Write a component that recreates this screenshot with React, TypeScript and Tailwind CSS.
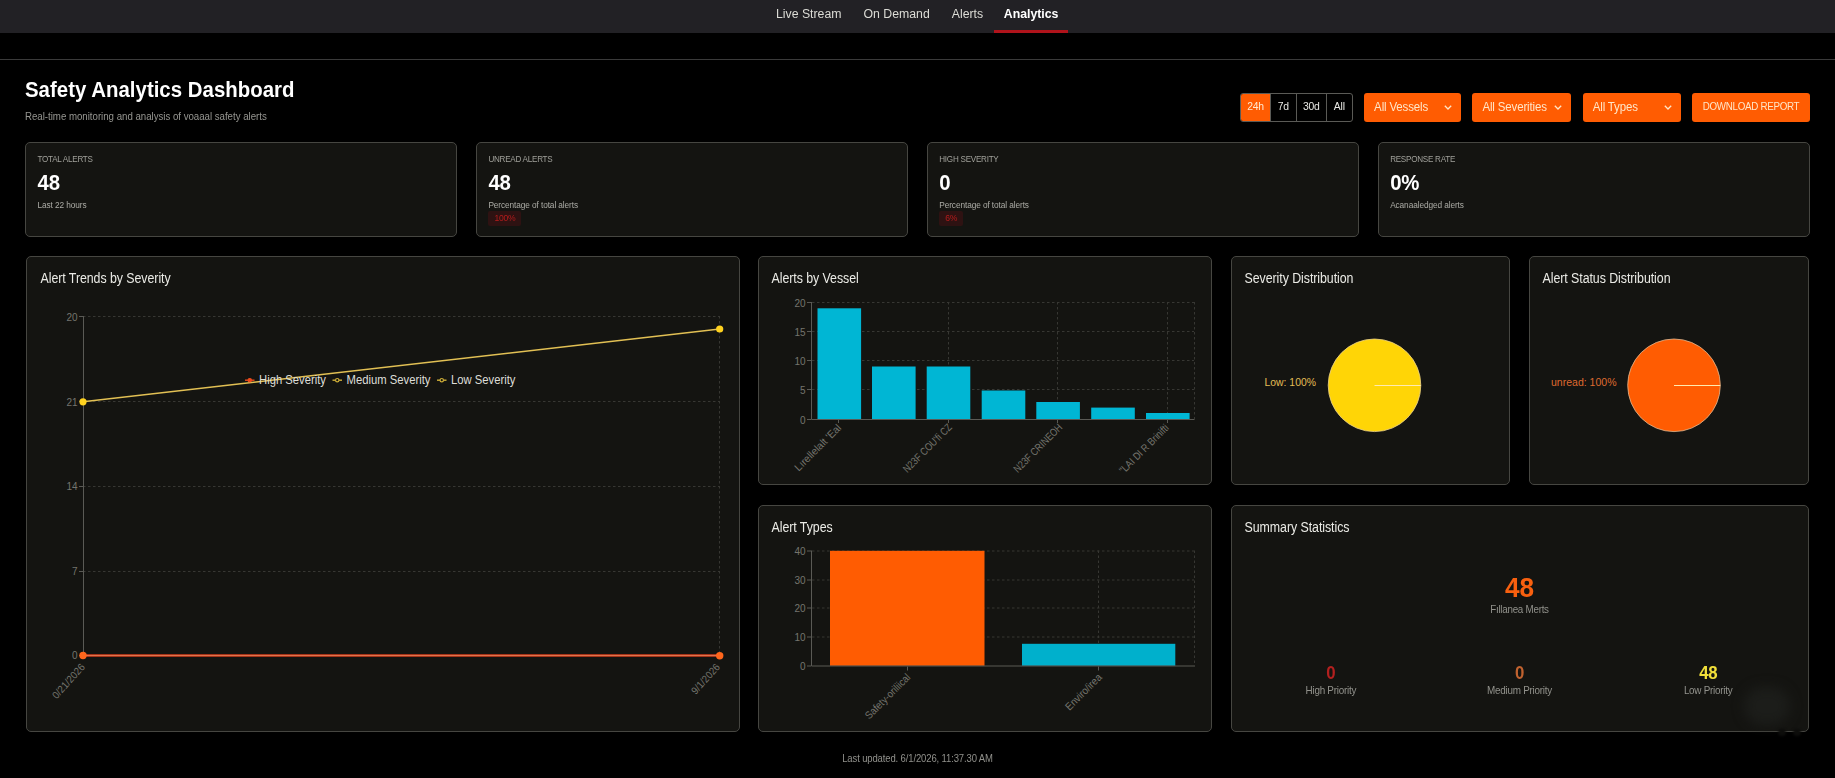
import React from 'react';

const INK = '#74746e';
const GRID = '#373733';
const AXIS = '#5a5a55';
const FONT = '"Liberation Sans", Arial, sans-serif';

const tabs = [
  { label: 'Live Stream', active: false },
  { label: 'On Demand', active: false },
  { label: 'Alerts', active: false },
  { label: 'Analytics', active: true },
];

const ranges = [
  { label: '24h', cls: 'w-[29.5px] bg-[#ff5c02] text-[#ffe9cf]' },
  { label: '7d', cls: 'w-[26px] text-[#e8e8e4]' },
  { label: '30d', cls: 'w-[30px] text-[#e8e8e4]' },
  { label: 'All', cls: 'w-[25px] text-[#e8e8e4]' },
];

const filters = [
  { label: 'All Vessels', cls: 'w-[97px]' },
  { label: 'All Severities', cls: 'w-[99px]' },
  { label: 'All Types', cls: 'w-[98px]' },
];

const stats = [
  { label: 'TOTAL ALERTS', value: '48', note: 'Last 22 hours', badge: '' },
  { label: 'UNREAD ALERTS', value: '48', note: 'Percentage of total alerts', badge: '100%' },
  { label: 'HIGH SEVERITY', value: '0', note: 'Percentage of total alerts', badge: '6%' },
  { label: 'RESPONSE RATE', value: '0%', note: 'Acanaaledged alerts', badge: '' },
];

function Panel({ title, className, children }: { title: string; className: string; children: React.ReactNode }) {
  return (
    <section className={`relative flex flex-col rounded-[5px] border border-[#464641] bg-[#141411] ${className}`}>
      <h2 className="pt-[14px] text-[12.4px] leading-[17px] tracking-[-0.06px] text-[#ebebe6]">
        <span className="inline-block scale-y-[1.12]">{title}</span>
      </h2>
      {children}
    </section>
  );
}

function Tick({ x, y, children, anchor = 'end', rotate = 0, size = 10, length }: {
  x: number; y: number; children: React.ReactNode; anchor?: 'start' | 'middle' | 'end'; rotate?: number; size?: number; length?: number;
}) {
  return (
    <text
      x={x}
      y={y}
      fill={INK}
      fontSize={size}
      fontFamily={FONT}
      textAnchor={anchor}
      textLength={length}
      lengthAdjust="spacingAndGlyphs"
      transform={rotate ? `rotate(${rotate} ${x} ${y})` : undefined}
    >
      {children}
    </text>
  );
}

/* Chart drawings share the page's pixel grid; each viewBox starts at the panel's inner corner. */
function TrendChart() {
  const legend = [
    { x: 245, label: 'High Severity', color: '#ee4b1c', fill: '#ee4b1c', len: 67 },
    { x: 332.5, label: 'Medium Severity', color: '#cfae38', fill: '#141411', len: 84 },
    { x: 437, label: 'Low Severity', color: '#cfae38', fill: '#141411', len: 64.5 },
  ];
  return (
    <svg className="block h-[443px] w-[711px]" viewBox="27 288 711 443">
      {[316.5, 401.5, 486.5, 571.5].map((y) => (
        <line key={y} x1="83" x2="720" y1={y} y2={y} stroke={GRID} strokeDasharray="2.5 2.5" />
      ))}
      <line x1="719.5" x2="719.5" y1="316" y2="655" stroke={GRID} strokeDasharray="2.5 2.5" />
      <line x1="83.5" x2="83.5" y1="316" y2="655" stroke={AXIS} />
      {[316.5, 401.5, 486.5, 571.5, 655.5].map((y) => (
        <line key={y} x1="79" x2="83" y1={y} y2={y} stroke={AXIS} />
      ))}
      <Tick x={77.5} y={320.5}>20</Tick>
      <Tick x={77.5} y={405.5}>21</Tick>
      <Tick x={77.5} y={490}>14</Tick>
      <Tick x={77.5} y={575}>7</Tick>
      <Tick x={77.5} y={659.3}>0</Tick>
      <line x1="83" y1="401.7" x2="719.7" y2="329" stroke="#e2c054" strokeWidth="1.4" />
      <circle cx="83" cy="401.8" r="3.6" fill="#ffd21f" />
      <circle cx="719.7" cy="329" r="3.6" fill="#ffd21f" />
      <line x1="83" y1="655.5" x2="719.7" y2="655.5" stroke="#a5331a" strokeWidth="3" />
      <line x1="83" y1="655.5" x2="719.7" y2="655.5" stroke="#e0744a" strokeWidth="1" />
      <circle cx="83" cy="655.5" r="3.7" fill="#ff661c" />
      <circle cx="719.7" cy="655.7" r="3.7" fill="#ff661c" />
      {legend.map((l) => (
        <g key={l.label}>
          <line x1={l.x} x2={l.x + 9.5} y1="380.2" y2="380.2" stroke={l.color} strokeWidth="1.4" />
          <circle cx={l.x + 4.75} cy="380.2" r="1.7" fill={l.fill} stroke={l.color} strokeWidth="1.2" />
          <text x={l.x + 14} y="384.3" fontSize="12.3" fontFamily={FONT} fill="#deded8" textLength={l.len} lengthAdjust="spacingAndGlyphs">{l.label}</text>
        </g>
      ))}
      <Tick x={85.5} y={667.5} rotate={-48} length={43} size={10.4}>0/21/2026</Tick>
      <Tick x={720.5} y={667.5} rotate={-48} length={37} size={10.4}>9/1/2026</Tick>
    </svg>
  );
}

function VesselChart() {
  const bars = [
    [817.5, 308.3], [872, 366.5], [926.7, 366.5], [981.7, 390.5], [1036.3, 402], [1091.2, 407.6], [1146, 413],
  ];
  const rows = [302.5, 331.5, 360.5, 389.5];
  return (
    <svg className="block h-[196px] w-[452px]" viewBox="759 288 452 196">
      {rows.map((y) => (
        <line key={y} x1="812" x2="1194" y1={y} y2={y} stroke={GRID} strokeDasharray="2.5 2.5" />
      ))}
      {[948.5, 1057.5, 1167.5, 1194.5].map((x) => (
        <line key={x} x1={x} x2={x} y1="302" y2="419" stroke={GRID} strokeDasharray="2.5 2.5" />
      ))}
      {bars.map(([x, y]) => (
        <rect key={x} x={x} y={y} width="43.6" height={419 - y} fill="#00b6d4" />
      ))}
      <path d="M811.5 302V419.5H1194.5" fill="none" stroke={AXIS} />
      {[...rows, 419.5].map((y, i) => (
        <g key={y}>
          <line x1="807" x2="811" y1={y} y2={y} stroke={AXIS} />
          <Tick x={805.5} y={y + 4}>{20 - i * 5}</Tick>
        </g>
      ))}
      {[838.5, 948.5, 1057.5, 1167.5].map((x) => (
        <line key={x} x1={x} x2={x} y1="420" y2="423" stroke={AXIS} />
      ))}
      <Tick x={842} y={428.5} rotate={-45} length={61} size={10.6}>Lırellelalt 'Eal</Tick>
      <Tick x={952.5} y={428} rotate={-45} length={64} size={10.6}>N23F COU'fi CZ</Tick>
      <Tick x={1063} y={428} rotate={-45} length={64} size={10.6}>N23F CRINEOH</Tick>
      <Tick x={1169.5} y={428.5} rotate={-45} length={65} size={10.6}>"LAI DI R Brinifti</Tick>
    </svg>
  );
}

function TypeChart() {
  const rows = [550.5, 579.5, 607.5, 636.5];
  return (
    <svg className="block h-[194px] w-[452px]" viewBox="759 536.5 452 194">
      {rows.map((y) => (
        <line key={y} x1="812" x2="1194" y1={y} y2={y} stroke={GRID} strokeDasharray="2.5 2.5" />
      ))}
      {[1098.5, 1194.5].map((x) => (
        <line key={x} x1={x} x2={x} y1="550" y2="665" stroke={GRID} strokeDasharray="2.5 2.5" />
      ))}
      <rect x="830" y="550.3" width="154.5" height="115" fill="#ff5c02" />
      <rect x="1022" y="643.3" width="153.3" height="22" fill="#00b0cc" />
      <path d="M811.5 550V665.5H1195" fill="none" stroke={AXIS} />
      {[...rows, 665.5].map((y, i) => (
        <g key={y}>
          <line x1="807" x2="811" y1={y} y2={y} stroke={AXIS} />
          <Tick x={805.5} y={y + 4}>{40 - i * 10}</Tick>
        </g>
      ))}
      {[907.5, 1098.5].map((x) => (
        <line key={x} x1={x} x2={x} y1="666" y2="670" stroke={AXIS} />
      ))}
      <Tick x={911} y={677.5} rotate={-45} length={59} size={10.6}>Safety-oriliical</Tick>
      <Tick x={1102.5} y={677.5} rotate={-45} length={46.5} size={10.6}>Enviro/irea</Tick>
    </svg>
  );
}

function Pie({ cx, left, color, edge, label, labelColor, labelEnd, len }: {
  cx: number; left: number; color: string; edge: string; label: string; labelColor: string; labelEnd: number; len: number;
}) {
  return (
    <svg className="block h-[196px] w-[277px]" viewBox={`${left} 288 277 196`}>
      <circle cx={cx} cy="385.3" r="46.3" fill={color} stroke={edge} strokeWidth="0.8" />
      <line x1={cx} x2={cx + 46.3} y1="385.5" y2="385.5" stroke="#ffeab0" strokeWidth="1" />
      <text x={labelEnd} y="386" textAnchor="end" fontSize="11.6" fontFamily={FONT} fill={labelColor} textLength={len} lengthAdjust="spacingAndGlyphs">{label}</text>
    </svg>
  );
}

function Priority({ value, label, color }: { value: string; label: string; color: string }) {
  return (
    <div className="flex flex-1 flex-col items-center">
      <span className={`scale-y-[1.05] text-[16.8px] font-bold leading-[20px] tracking-[-0.3px] ${color}`}>{value}</span>
      <span className="scale-y-[1.08] text-[9.9px] leading-[14px] tracking-[-0.25px] text-[#92928c]">{label}</span>
    </div>
  );
}

export default function App() {
  return (
    <div className="flex h-[778px] w-[1835px] flex-col overflow-hidden bg-black font-['Liberation_Sans',Arial,sans-serif]">
      <nav className="flex h-[33px] shrink-0 bg-[#222125] pl-[765px] text-[12.3px]">
        {tabs.map((t) => (
          <a
            key={t.label}
            className={
              t.active
                ? 'flex h-[33px] w-[74px] justify-center border-b-[3px] border-[#b0131b] pt-[5px] font-bold leading-[18px] text-white'
                : 'flex h-[33px] px-[11px] pt-[5px] leading-[18px] tracking-[-0.01px] text-[#dcdcd6]'
            }
          >
            <span className="h-[18px] scale-y-[1.08]">{t.label}</span>
          </a>
        ))}
      </nav>
      <div className="h-[27px] shrink-0 border-b border-[#3a3a3a]" />

      <header className="flex h-[82px] shrink-0 justify-between px-[25px]">
        <div className="flex flex-col items-start pt-[18px]">
          <h1 className="scale-y-[1.04] text-[20.4px] font-bold leading-[24px] tracking-[0.02px] text-white">
            Safety Analytics Dashboard
          </h1>
          <p className="mt-[8px] scale-y-[1.12] text-[9.7px] leading-[14px] tracking-[-0.02px] text-[#969691]">
            Real-time monitoring and analysis of voaaal safety alerts
          </p>
        </div>
        <div className="flex gap-[11.3px] pt-[33px]">
          <div className="flex h-[29px] divide-x divide-[#5a5a56] overflow-hidden rounded-[3px] border border-[#5a5a56] text-[10.4px] tracking-[-0.2px]">
            {ranges.map((r) => (
              <button key={r.label} className={`flex justify-center pt-[5px] leading-[16px] ${r.cls}`}>
                <span className="scale-y-[1.08]">{r.label}</span>
              </button>
            ))}
          </div>
          {filters.map((f) => (
            <button
              key={f.label}
              className={`flex h-[29px] items-center justify-between rounded-[3px] bg-[#ff5c02] pl-[10px] pr-[9px] text-[11.5px] tracking-[-0.15px] text-[#ffe6c8] ${f.cls}`}
            >
              <span className="scale-y-[1.1]">{f.label}</span>
              <svg className="h-[5px] w-[8px]" viewBox="0 0 8 5" fill="none" stroke="#ffe6c8" strokeWidth="1.3">
                <path d="M0.8 0.8 4 4 7.2 0.8" />
              </svg>
            </button>
          ))}
          <button className="flex h-[29px] w-[118px] items-center justify-center rounded-[3px] bg-[#ff5c02] text-[9.8px] tracking-[-0.3px] text-[#ffe6c8]">
            <span className="scale-y-[1.12]">DOWNLOAD REPORT</span>
          </button>
        </div>
      </header>

      <div className="grid shrink-0 grid-cols-4 gap-[18.5px] px-[25px]">
        {stats.map((s) => (
          <div key={s.label} className="flex h-[95px] flex-col items-start rounded-[5px] border border-[#464641] bg-[#141411] pl-[11.5px] pt-[10px]">
            <span className="scale-y-[1.18] text-[8.1px] leading-[14px] tracking-[-0.25px] text-[#a0a09a]">{s.label}</span>
            <span className="mt-[3px] scale-y-[1.1] text-[20.4px] font-bold leading-[24px] tracking-[-0.1px] text-white">{s.value}</span>
            <span className="mt-[3px] scale-y-[1.18] text-[8.3px] leading-[14px] tracking-[-0.1px] text-[#acaca6]">{s.note}</span>
            {s.badge && (
              <span className="flex h-[15px] items-center rounded-[2px] bg-[#2e1212] px-[6px] text-[8.6px] leading-none tracking-[-0.25px] text-[#b51c1c]">
                <span className="scale-y-[1.12]">{s.badge}</span>
              </span>
            )}
          </div>
        ))}
      </div>

      <main className="mt-[19px] flex h-[476px] shrink-0 gap-[18.5px] pl-[26px]">
        <Panel title="Alert Trends by Severity" className="w-[713.5px] [&>h2]:pl-[13.5px]">
          <TrendChart />
        </Panel>
        <div className="flex w-[454px] flex-col gap-[20px]">
          <Panel title="Alerts by Vessel" className="h-[229px] [&>h2]:pl-[12.5px]">
            <VesselChart />
          </Panel>
          <Panel title="Alert Types" className="h-[227px] [&>h2]:pl-[12.5px]">
            <TypeChart />
          </Panel>
        </div>
        <div className="flex w-[578px] flex-col gap-[20px]">
          <div className="flex gap-[18.5px]">
            <Panel title="Severity Distribution" className="h-[229px] w-[279.5px] [&>h2]:pl-[13px]">
              <Pie cx={1374} left={1231.5} color="#ffd506" edge="#e8cf8a" label="Low: 100%" labelColor="#e3bd55" labelEnd={1315.5} len={51.5} />
            </Panel>
            <Panel title="Alert Status Distribution" className="h-[229px] w-[280px] [&>h2]:pl-[13px]">
              <Pie cx={1673.5} left={1529.5} color="#ff5c02" edge="#e0b890" label="unread: 100%" labelColor="#df6a30" labelEnd={1616} len={65.5} />
            </Panel>
          </div>
          <Panel title="Summary Statistics" className="h-[227px] [&>h2]:pl-[13px]">
            <div className="flex flex-col items-center pt-[36px]">
              <span className="scale-y-[1.05] text-[26.2px] font-bold leading-[30px] text-[#f8600f]">48</span>
              <span className="scale-y-[1.08] text-[9.8px] leading-[14px] tracking-[-0.25px] text-[#92928c]">Fıllanea Merts</span>
            </div>
            <div className="flex px-[5px] pt-[47px]">
              <Priority value="0" label="High Priority" color="text-[#b3201f]" />
              <Priority value="0" label="Medium Priority" color="text-[#c0622f]" />
              <Priority value="48" label="Low Priority" color="text-[#f2e03a]" />
            </div>
            <div className="absolute bottom-[6px] right-[18px] h-[38px] w-[46px] rounded-full bg-[#1c1d1a] blur-[6px]" />
            <div className="absolute -bottom-[5px] right-[22px] h-[7px] w-[8px] rounded-full bg-[#0d0d0b] blur-[1px]" />
            <div className="absolute -bottom-[5px] right-[7px] h-[7px] w-[8px] rounded-full bg-[#0d0d0b] blur-[1px]" />
          </Panel>
        </div>
      </main>

      <footer className="flex justify-center pt-[20px] text-[9.5px] leading-[14px] tracking-[-0.13px] text-[#90908b]">
        <span className="scale-y-[1.12]">Last updated. 6/1/2026, 11:37.30 AM</span>
      </footer>
    </div>
  );
}
